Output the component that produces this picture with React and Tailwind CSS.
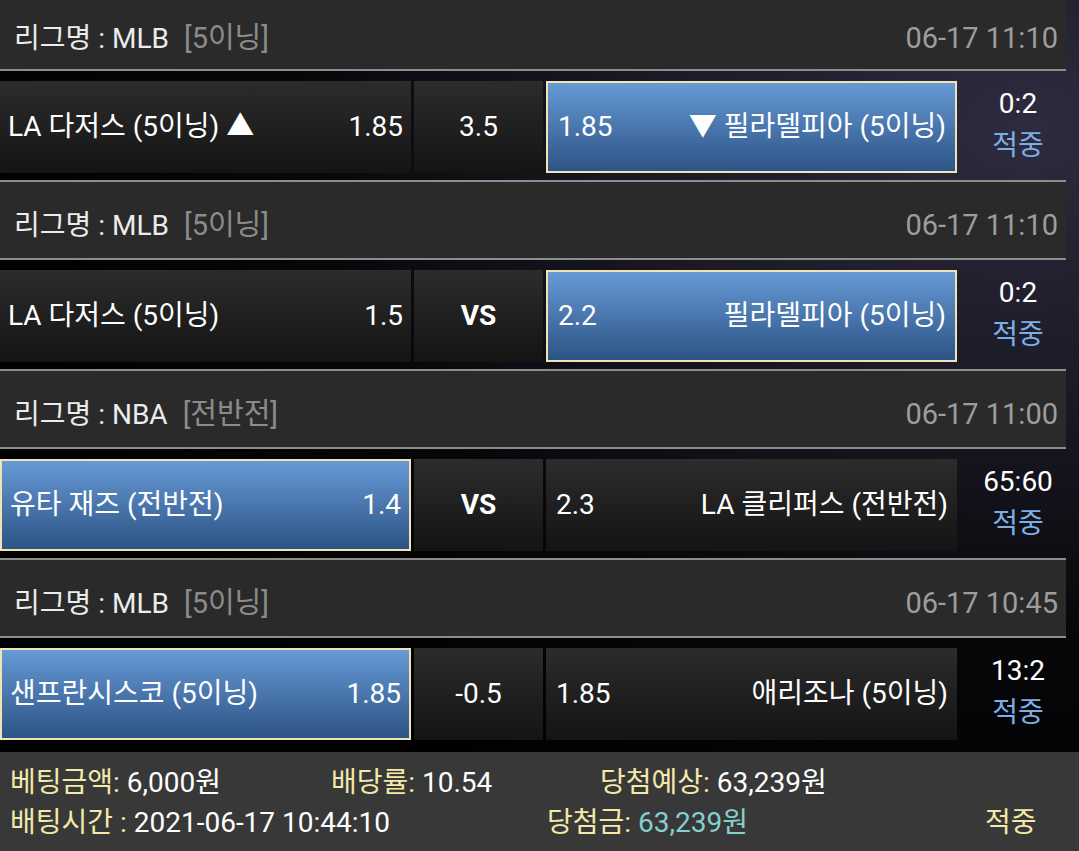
import React from "react";

const matches = [
  {
    league: "MLB",
    tag: "[5이닝]",
    time: "06-17 11:10",
    home: "LA 다저스 (5이닝) ▲",
    homeOdds: "1.85",
    mid: "3.5",
    away: "▼ 필라델피아 (5이닝)",
    awayOdds: "1.85",
    pick: "away",
    score: "0:2",
  },
  {
    league: "MLB",
    tag: "[5이닝]",
    time: "06-17 11:10",
    home: "LA 다저스 (5이닝)",
    homeOdds: "1.5",
    mid: "VS",
    away: "필라델피아 (5이닝)",
    awayOdds: "2.2",
    pick: "away",
    score: "0:2",
  },
  {
    league: "NBA",
    tag: "[전반전]",
    time: "06-17 11:00",
    home: "유타 재즈 (전반전)",
    homeOdds: "1.4",
    mid: "VS",
    away: "LA 클리퍼스 (전반전)",
    awayOdds: "2.3",
    pick: "home",
    score: "65:60",
  },
  {
    league: "MLB",
    tag: "[5이닝]",
    time: "06-17 10:45",
    home: "샌프란시스코 (5이닝)",
    homeOdds: "1.85",
    mid: "-0.5",
    away: "애리조나 (5이닝)",
    awayOdds: "1.85",
    pick: "home",
    score: "13:2",
  },
];

const darkBox = "bg-gradient-to-b from-[#2c2c2c] to-[#141414]";
const blueBox =
  "bg-gradient-to-b from-[#679ad6] to-[#2d5486] border-2 border-[#efe4b6]";

const Header = ({ m, first }) => (
  <div
    className={`w-[1066px] ${first ? "h-[71px] pt-[8px]" : "h-[80px] border-t-2 pt-[12px]"} border-b-2 border-[#8d8d8d] bg-[#2a2a2a] flex items-center justify-between pl-[14px] pr-[8px]`}
  >
    <div className="flex items-center text-[28px]">
      <span className="text-[#ececec]">리그명 : {m.league}</span>
      <span className="text-[#8b8b8b] ml-[15px] text-[29px]">{m.tag}</span>
    </div>
    <span className="text-[29px] text-[#9d9d9d]">{m.time}</span>
  </div>
);

const Row = ({ m }) => (
  <div className="flex h-[92px] mt-[10px] mb-[7px] text-[28px]">
    <div
      className={`w-[411px] flex items-center justify-between pl-[8px] pr-[8px] ${m.pick === "home" ? blueBox : darkBox}`}
    >
      <span>{m.home}</span>
      <span>{m.homeOdds}</span>
    </div>
    <div
      className={`w-[129px] ml-[3px] flex items-center justify-center ${darkBox} ${m.mid === "VS" ? "font-bold" : ""}`}
    >
      {m.mid}
    </div>
    <div
      className={`w-[411px] ml-[3px] flex items-center justify-between pl-[10px] pr-[9px] ${m.pick === "away" ? blueBox : darkBox}`}
    >
      <span>{m.awayOdds}</span>
      <span>{m.away}</span>
    </div>
    <div className="w-[122px] flex flex-col items-center justify-center leading-[42px] pb-[4px]">
      <span className="text-white">{m.score}</span>
      <span className="text-[#7eaee6]">적중</span>
    </div>
  </div>
);

export default function App() {
  return (
    <div className="w-[1079px] h-[851px] overflow-hidden flex flex-col text-white font-['Roboto','Noto_Sans_CJK_KR',sans-serif] bg-[radial-gradient(ellipse_at_95%_15%,#2e2b3f_0%,#1b1a26_25%,#07070a_50%,#000_75%)]">
      <div className="flex flex-col">
        {matches.map((m, i) => (
          <div key={i} className="flex flex-col">
            <Header m={m} first={i === 0} />
            <Row m={m} />
          </div>
        ))}
      </div>
      <div className="mt-[5px] flex-1 bg-[#383838] flex flex-col justify-center pl-[10px] text-[28px] leading-[40px] pt-[2px]">
        <div className="flex">
          <div className="w-[321px]">
            <span className="text-[#f3e9a8]">베팅금액:</span> 6,000원
          </div>
          <div className="w-[269px]">
            <span className="text-[#f3e9a8]">배당률:</span> 10.54
          </div>
          <div>
            <span className="text-[#f3e9a8]">당첨예상:</span> 63,239원
          </div>
        </div>
        <div className="flex">
          <div className="w-[537px]">
            <span className="text-[#f3e9a8]">배팅시간 :</span> 2021-06-17 10:44:10
          </div>
          <div className="w-[438px]">
            <span className="text-[#f3e9a8]">당첨금:</span>{" "}
            <span className="text-[#86cfcf]">63,239원</span>
          </div>
          <div className="text-[#f3e9a8]">적중</div>
        </div>
      </div>
    </div>
  );
}
